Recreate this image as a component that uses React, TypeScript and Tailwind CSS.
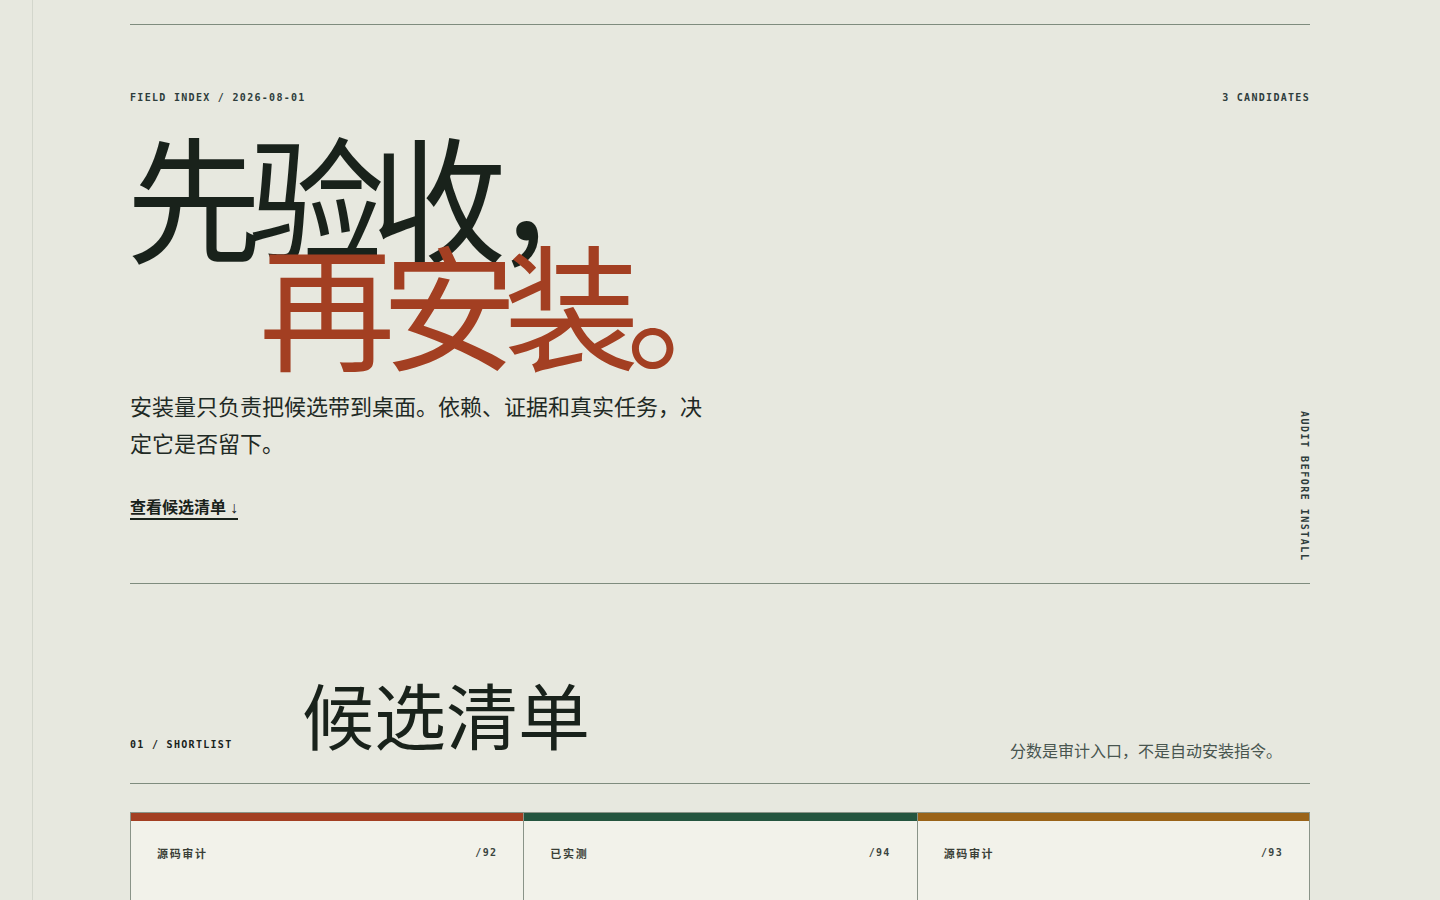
const CJK = 'font-["Noto_Sans_CJK_SC",sans-serif]';
const MONO = 'font-["DejaVu_Sans_Mono","Liberation_Mono",monospace]';

const CARDS = [
  { label: '源码审计', score: '/92', bar: 'bg-[#a33f22]' },
  { label: '已实测', score: '/94', bar: 'bg-[#24553f]' },
  { label: '源码审计', score: '/93', bar: 'bg-[#9a6318]' },
];

function Hero() {
  return (
    <section className="border-t border-[#7f8c7e]">
      <div className={`flex justify-between pt-[65px] text-[10px] leading-[15px] font-bold tracking-[0.13em] text-[#2e3d3c] ${MONO}`}>
        <span>FIELD INDEX / 2026-08-01</span>
        <span>3 CANDIDATES</span>
      </div>

      <div className="flex items-end justify-between">
        <div className="pb-[63px]">
          <h1 className={`-ml-[4px] mt-[34px] text-[136px] leading-[110px] font-normal tracking-[-0.1em] ${CJK}`}>
            <span className="block text-[#19221b]">先验收，</span>
            <span className="block -mt-[2px] pl-[133px] text-[#a33f22]">再安装。</span>
          </h1>
          <p className={`mt-[30px] max-w-[580px] text-[22px] leading-[1.7] text-[#1f2a25] ${CJK}`}>
            安装量只负责把候选带到桌面。依赖、证据和真实任务，决定它是否留下。
          </p>
          <a
            href="#shortlist"
            className={`mt-[34px] inline-block border-b-2 border-[#19221b] text-[16px] leading-[20px] font-semibold text-[#19221b] ${CJK}`}
          >
            查看候选清单<span className='ml-1 font-["Liberation_Sans",sans-serif] font-normal'>↓</span>
          </a>
        </div>
        <div className={`mb-[21px] [writing-mode:vertical-rl] text-[10px] leading-[11px] font-bold tracking-[0.15em] text-[#2e3d3c] ${MONO}`}>
          AUDIT BEFORE INSTALL
        </div>
      </div>
    </section>
  );
}

function Shortlist() {
  return (
    <section id="shortlist" className="border-t border-[#7f8c7e]">
      <div className="flex items-end pt-[93px] pb-5 border-b border-[#7f8c7e]">
        <div className={`w-[172px] mb-[11px] text-[10px] leading-[15px] font-bold tracking-[0.13em] text-[#19221b] ${MONO}`}>
          01 / SHORTLIST
        </div>
        <h2 className={`mb-[14px] text-[72px] leading-none font-normal text-[#19221b] ${CJK}`}>候选清单</h2>
        <p className={`ml-auto mr-7 mb-px text-[16px] leading-6 text-[#48554f] ${CJK}`}>
          分数是审计入口，不是自动安装指令。
        </p>
      </div>

      <div className="mt-7 grid grid-cols-3">
        {CARDS.map((c, i) => (
          <div
            key={i}
            className={`min-h-[320px] border-t border-l border-b border-[#8a9488] bg-[#f2f2ea] ${i === CARDS.length - 1 ? 'border-r' : ''}`}
          >
            <div className={`h-2 ${c.bar}`}></div>
            <div className="flex items-center justify-between px-[26px] pt-6">
              <span className={`text-[11px] leading-4 font-bold tracking-[0.15em] text-[#3a3f37] ${CJK}`}>{c.label}</span>
              <span className={`text-[10px] leading-4 font-bold tracking-[0.13em] text-[#3a4540] ${MONO}`}>{c.score}</span>
            </div>
          </div>
        ))}
      </div>
    </section>
  );
}

export default function App() {
  return (
    <div className="min-h-screen bg-[#e7e8df] pl-8">
      <div className="min-h-screen border-l border-[#d3d6cc] pl-[97px] pr-[130px] pt-6">
        <Hero />
        <Shortlist />
      </div>
    </div>
  );
}
